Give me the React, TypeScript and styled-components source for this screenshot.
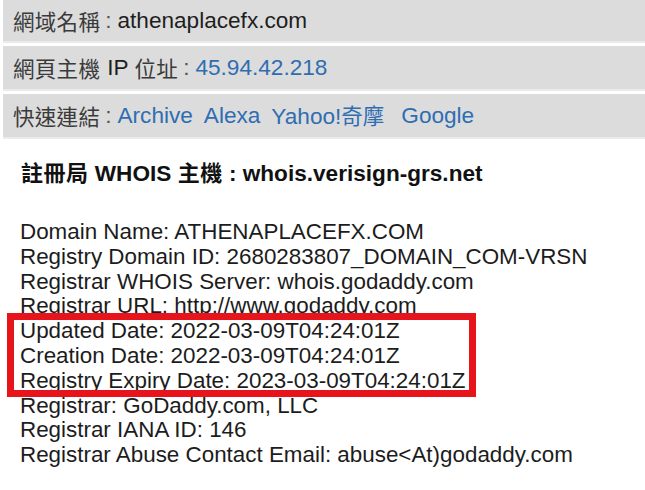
import React from "react";
import styled, { createGlobalStyle } from "styled-components";

const GlobalStyle = createGlobalStyle`
  html, body {
    margin: 0;
    padding: 0;
    background: #ffffff;
  }
  body {
    font-family: "Liberation Sans", Arial, "Noto Sans CJK TC", sans-serif;
    color: #222222;
    overflow: hidden;
  }
`;

const Page = styled.div`
  width: 645px;
  height: 490px;
  padding-left: 3px;
  box-sizing: border-box;
  overflow: hidden;
`;

const InfoList = styled.div`
  display: flex;
  flex-direction: column;
  gap: 3px;
`;

const InfoRow = styled.div<{ $h: number }>`
  display: flex;
  align-items: center;
  height: ${(p) => p.$h}px;
  padding-left: 10px;
  background: #dcdcdc;
  border-bottom: 2px solid #ebebeb;
  font-size: 22.6px;
  line-height: 26px;
  white-space: nowrap;
`;

const Label = styled.span`
  font-family: "Noto Sans CJK TC", "Liberation Sans", sans-serif;
  color: #3a3a3a;
  font-size: 21.5px;
  letter-spacing: 0.3px;
`;

const Sep = styled.span`
  color: #555555;
  margin: 0 6px 0 5px;
`;

const Value = styled.span<{ $ml?: number; $mr?: number }>`
  color: #1e1e1e;
  margin-left: ${(p) => p.$ml ?? 0}px;
  margin-right: ${(p) => p.$mr ?? 0}px;
`;

const Link = styled.a`
  color: #2f6db3;
  text-decoration: none;
  margin-right: 11px;
`;

const Cjk = styled.span`
  font-family: "Noto Sans CJK TC", sans-serif;
  font-size: 21.5px;
  margin-right: 6px;
`;

const Whois = styled.div`
  padding: 20px 0 0 17px;
`;

const Heading = styled.div`
  font-weight: bold;
  font-size: 22.6px;
  line-height: 25px;
  color: #111111;
  white-space: nowrap;
  margin-bottom: 34px;
  padding-left: 1px;
`;

const HeadCjk = styled.span`
  font-family: "Noto Sans CJK TC", sans-serif;
  font-weight: 700;
  font-size: 22px;
  letter-spacing: 0.5px;
`;

const Line = styled.div`
  font-size: 22.4px;
  line-height: 24.8px;
  color: #1c1c1c;
  white-space: nowrap;
`;

const Highlight = styled.div`
  position: relative;
  display: inline-block;
  &::after {
    content: "";
    position: absolute;
    left: -13px;
    right: -10px;
    top: -6px;
    bottom: -3px;
    border: 7px solid #e8141c;
    pointer-events: none;
  }
`;

const before = [
  "Domain Name: ATHENAPLACEFX.COM",
  "Registry Domain ID: 2680283807_DOMAIN_COM-VRSN",
  "Registrar WHOIS Server: whois.godaddy.com",
  "Registrar URL: http://www.godaddy.com",
];
const dates = [
  "Updated Date: 2022-03-09T04:24:01Z",
  "Creation Date: 2022-03-09T04:24:01Z",
  "Registry Expiry Date: 2023-03-09T04:24:01Z",
];
const after = [
  "Registrar: GoDaddy.com, LLC",
  "Registrar IANA ID: 146",
  "Registrar Abuse Contact Email: abuse<At)godaddy.com",
];

export default function App() {
  return (
    <Page>
      <GlobalStyle />
      <InfoList>
        <InfoRow $h={41}>
          <Label>網域名稱</Label>
          <Sep>:</Sep>
          <Value>athenaplacefx.com</Value>
        </InfoRow>
        <InfoRow $h={43}>
          <Label>網頁主機</Label>
          <Value $ml={7} $mr={6}>IP</Value>
          <Label>位址</Label>
          <Sep>:</Sep>
          <Link href="#">45.94.42.218</Link>
        </InfoRow>
        <InfoRow $h={43}>
          <Label>快速連結</Label>
          <Sep>:</Sep>
          <Link href="#">Archive</Link>
          <Link href="#">Alexa</Link>
          <Link href="#">
            Yahoo!<Cjk>奇摩</Cjk>
          </Link>
          <Link href="#">Google</Link>
        </InfoRow>
      </InfoList>
      <Whois>
        <Heading>
          <HeadCjk>註冊局</HeadCjk> WHOIS <HeadCjk>主機</HeadCjk> : whois.verisign-grs.net
        </Heading>
        {before.map((t) => (
          <Line key={t}>{t}</Line>
        ))}
        <Highlight>
          {dates.map((t) => (
            <Line key={t}>{t}</Line>
          ))}
        </Highlight>
        {after.map((t) => (
          <Line key={t}>{t}</Line>
        ))}
      </Whois>
    </Page>
  );
}
